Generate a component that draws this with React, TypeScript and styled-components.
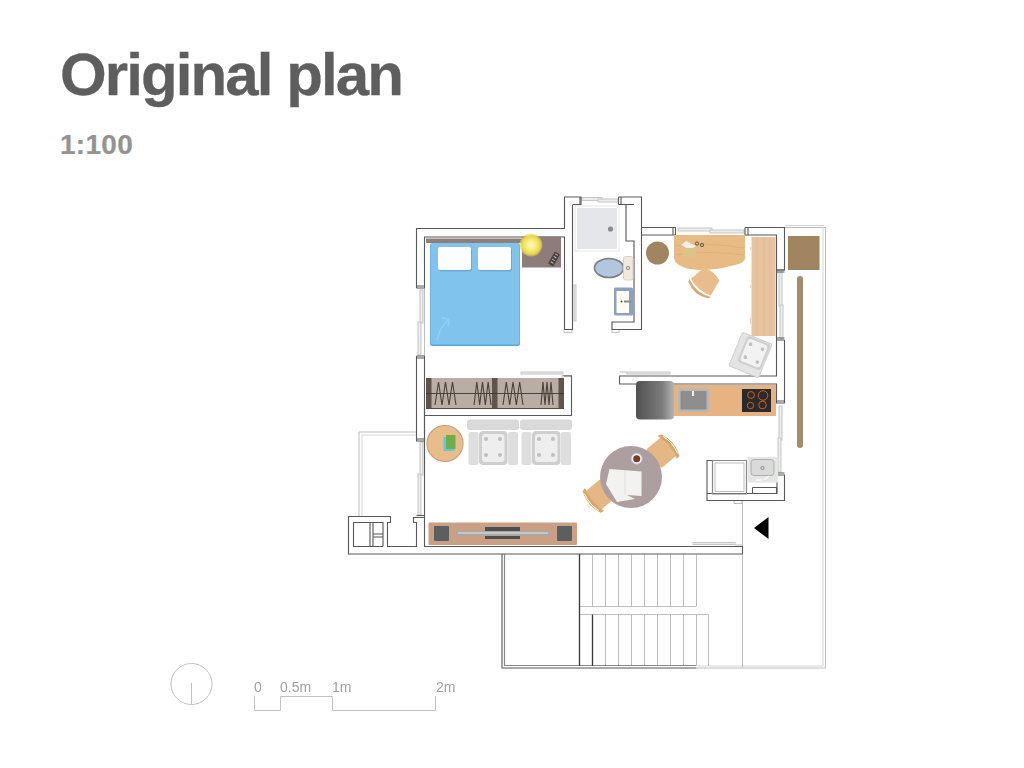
import React from "react";
import styled, { createGlobalStyle } from "styled-components";

const Global = createGlobalStyle`
  html, body { margin: 0; padding: 0; background: #fff; overflow: hidden; }
  #root { width: 1024px; height: 768px; }
`;

const Page = styled.main`
  width: 1024px;
  height: 768px;
  display: flex;
  flex-direction: column;
  background: #fff;
  font-family: "Liberation Sans", Arial, sans-serif;
`;
const Header = styled.header`
  padding: 42px 0 0 60px;
  height: 138px;
  box-sizing: border-box;
`;
const Title = styled.h1`
  margin: 0;
  font-size: 60px;
  line-height: 66px;
  font-weight: 700;
  letter-spacing: -1.9px;
  color: #5e5e5e;
  -webkit-text-stroke: 0.3px #5e5e5e;
`;
const Scale = styled.p`
  margin: 21px 0 0;
  font-size: 28px;
  line-height: 32px;
  font-weight: 700;
  letter-spacing: 0.3px;
  color: #939393;
  -webkit-text-stroke: 0.2px #939393;
`;
const Drawing = styled.svg`
  display: block;
  width: 1024px;
  height: 630px;
  flex: none;
`;
const Wall = styled.path`
  fill: none;
  stroke: #585858;
  stroke-width: 1.1;
`;
const HeavyWall = styled(Wall)`
  stroke: #383838;
  stroke-width: 1.3;
`;
const MidLine = styled(Wall)`
  stroke: #888;
  stroke-width: 1.2;
`;
const Faint = styled.path`
  fill: none;
  stroke: #bdbdbd;
  stroke-width: 1;
`;
const Pale = styled(Faint)`
  stroke: #d6d6d6;
`;
const Sash = styled.rect`
  fill: #ececec;
  stroke: #c6c6c6;
  stroke-width: 1;
`;
const Legend = styled.path`
  fill: none;
  stroke: #c2c2c2;
  stroke-width: 1;
`;
const ScaleLabel = styled.text`
  font-family: "Liberation Sans", Arial, sans-serif;
  font-size: 14px;
  fill: #a0a0a0;
`;

const Zigzag = ({ x, w }: { x: number; w: number }) => {
  const step = w / 6;
  const pts = [0, 1, 2, 3, 4, 5, 6]
    .map((i) => `${x + i * step} ${i % 2 ? 382 : 405}`)
    .join(" L");
  return <path d={`M${pts}`} fill="none" stroke="#4a403a" strokeWidth="1.1" />;
};

const Sofa = ({ x }: { x: number }) => (
  <g>
    <rect x={x} y={419.5} width={52} height={10.5} rx={3} fill="#d9d9d9" />
    <rect x={x + 1.5} y={432} width={10} height={33} rx={2} fill="#dedede" />
    <rect x={x + 41} y={432} width={10} height={33} rx={2} fill="#dedede" />
    <rect x={x + 12} y={431} width={28.5} height={34} rx={4} fill="#cfcfcf" />
    <rect x={x + 15} y={434} width={22.5} height={28} rx={3} fill="#eeeeee" />
    {[[19, 439], [33, 439], [19, 455], [33, 455]].map(([dx, y]) => (
      <circle key={`${dx}-${y}`} cx={x + dx} cy={y} r={2} fill="#bebebe" />
    ))}
  </g>
);

const Chair = ({ transform }: { transform: string }) => (
  <g transform={transform}>
    <rect x={-12} y={-11} width={24} height={22} rx={2} fill="#e5b785" />
    <path d="M-14 -11 Q0 -17 14 -11 L15 -7 Q0 -12 -15 -7 Z" fill="#dba768" />
    <path d="M-11 -11 Q0 -14.5 11 -11" fill="none" stroke="#fff" strokeWidth="0.9" />
  </g>
);

const Furniture = () => (
  <g filter="url(#soft)">
    {/* bed */}
    <rect x={430} y={243} width={90} height={103} rx={2.5} fill="#5aa6dc" />
    <rect x={430.5} y={243} width={89} height={101.5} rx={2} fill="#80c4ee" />
    <rect x={426} y={238.5} width={96} height={4.5} fill="#8f7f79" />
    <rect x={439} y={248.5} width={33} height={23} rx={2} fill="#6ea9d6" />
    <rect x={479} y={248.5} width={33} height={23} rx={2} fill="#6ea9d6" />
    <rect x={438} y={247} width={33} height={23} rx={2} fill="#fbfdff" />
    <rect x={478} y={247} width={33} height={23} rx={2} fill="#fbfdff" />
    <path d="M437 340 Q441 325 449 319 L442 318 M449 319 L448 327" fill="none" stroke="#93cff2" strokeWidth="1.5" />
    {/* nightstand */}
    <rect x={522} y={236.5} width={39} height={31} fill="#8e7b7a" />
    <circle cx={531} cy={245} r={11.5} fill="url(#lamp)" />
    <g transform="rotate(30 554 259)">
      <rect x={551} y={252} width={6} height={14} rx={1} fill="#4a4240" />
      <path d="M552.5 254h3M552.5 257h3M552.5 260h3M552.5 263h3" stroke="#bbb" strokeWidth="1" />
    </g>

    {/* shower */}
    <rect x={575} y={206} width={44} height={45} fill="#fff" stroke="#e6e6e8" />
    <rect x={577} y={208} width={40} height={41} fill="#e5e6ea" />
    <circle cx={610.5} cy={229} r={2.6} fill="#8b8b8b" />
    {/* toilet */}
    <ellipse cx={609} cy={268} rx={14.5} ry={9.5} fill="#b2c6de" stroke="#7d7d7d" strokeWidth="1.6" />
    <rect x={623.5} y={256.5} width={9.5} height={23.5} rx={2} fill="#f1e8de" stroke="#d8d0c6" />
    <circle cx={628} cy={268} r={1.6} fill="none" stroke="#888" />
    {/* basin */}
    <rect x={614} y={287.5} width={19} height={28} rx={1.5} fill="#8ea0bc" />
    <rect x={616.5} y={291} width={12.5} height={22} fill="#fdfcf7" />
    <path d="M624 301.5h7" stroke="#888" strokeWidth="2" />
    <circle cx={621.5} cy={301.5} r={1} fill="#444" />

    {/* study */}
    <circle cx={657.5} cy={253} r={11.5} fill="#a08560" />
    <path d="M674 235H745V258Q745 263 735 265Q710 272 690 269Q675 266 674 258Z" fill="#e8bb85" />
    <path d="M675 246Q700 241 744 248M675 255Q705 250 744 255" fill="none" stroke="#d8a873" strokeWidth="0.6" />
    <path d="M681 245L686 241L696 246L690 250Z" fill="#f4f0e8" />
    <rect x={683} y={248} width={13} height={9} fill="#d9c48a" />
    <circle cx={697} cy={243.5} r={1.6} fill="none" stroke="#555" />
    <circle cx={702} cy={245} r={1.6} fill="none" stroke="#555" />
    <g transform="translate(706 281) rotate(40)">
      <path d="M-13 8Q0 13 13 8L10 -9Q0 -13 -10 -9Z" fill="#e9bd8b" />
      <path d="M-14 9Q0 16 14 9L13 12Q0 19 -13 12Z" fill="#d9a96e" />
    </g>
    <rect x={751.5} y={237} width={24} height={99} fill="#e8c3a0" />
    <path d="M757 237V336M764 237V336M770 237V336" stroke="#e0b68f" strokeWidth="0.6" />
    <path d="M750.5 247v3M750.5 285v3M750.5 318v6" stroke="#e8d2bc" strokeWidth="1" />

    {/* armchair */}
    <g transform="translate(750.5 355) rotate(22)">
      <rect x={-16} y={-18} width={32} height={36} rx={2} fill="#e4e4e4" stroke="#d0d0d0" />
      <rect x={-10} y={-17} width={25} height={28} rx={3} fill="#cfcfcf" />
      <rect x={-8} y={-15} width={21} height={24} rx={3} fill="#f2f2f2" />
      {[[-4, -10], [9, -10], [-4, 4], [9, 4]].map(([x, y]) => (
        <circle key={`${x}-${y}`} cx={x} cy={y} r={1.8} fill="#c0c0c0" />
      ))}
    </g>

    {/* outside store */}
    <rect x={788} y={236} width={31.5} height={34} fill="#a08560" />
    <rect x={797} y={276} width={6} height={172} rx={3} fill="#a38d6a" />

    {/* wardrobe */}
    <rect x={426} y={378} width={138} height={30.5} rx={1} fill="#b9aea4" />
    <rect x={426} y={378} width={5.5} height={30.5} fill="#5f544e" />
    <rect x={492} y={378} width={5.5} height={30.5} fill="#5f544e" />
    <rect x={558.5} y={378} width={5.5} height={30.5} fill="#5f544e" />
    <path d="M426 393.5H564" stroke="#3f3733" strokeWidth="0.9" />
    <path d="M426 408.5H564" stroke="#554b45" strokeWidth="1" />
    <Zigzag x={435} w={21} />
    <Zigzag x={474} w={17} />
    <Zigzag x={503} w={20} />
    <Zigzag x={541} w={12} />

    {/* side table */}
    <circle cx={445} cy={443.5} r={18} fill="#e9bc8c" stroke="#c9a285" strokeWidth="1.2" />
    <rect x={443.5} y={437} width={11} height={14} fill="#5ccbdc" />
    <rect x={446} y={435} width={9.5} height={14} fill="#72ad4e" />

    <Sofa x={467} />
    <Sofa x={520} />

    {/* tv */}
    <rect x={428.5} y={522.5} width={148.5} height={22.5} rx={1} fill="#c9a086" />
    <rect x={434} y={526} width={15} height={15} rx={1} fill="#5c5e60" />
    <rect x={557} y={526} width={15} height={15} rx={1} fill="#5c5e60" />
    <rect x={485} y={527} width={35} height={12} fill="#4d4f50" />
    <path d="M456 531H550L548 536H458Z" fill="#a8a8a4" />
    <path d="M458 533H548" stroke="#e6e6e2" strokeWidth="1" />

    {/* kitchen */}
    <rect x={673.5} y={385} width={102.5} height={31} fill="#e8b383" />
    <rect x={678} y={388.5} width={31} height={23.5} rx={2} fill="#b7b7b5" />
    <rect x={680.5} y={391} width={26} height={18.5} fill="#8e8e8e" />
    <path d="M693 391v5" stroke="#eee" strokeWidth="2" />
    <rect x={742} y={389} width={29} height={23} fill="#2c2c2c" />
    {[[751, 395, 3.4], [763, 395.5, 4.8], [750.5, 405.5, 3.2], [762.5, 405, 3.8]].map(([cx, cy, r]) => (
      <circle key={cx + cy} cx={cx} cy={cy} r={r} fill="none" stroke="#c95d24" strokeWidth="1" />
    ))}
    <rect x={636} y={381} width={38} height={38.5} rx={4} fill="url(#bin)" />

    {/* dining */}
    <Chair transform="translate(662 452) rotate(50)" />
    <Chair transform="translate(600 495) rotate(230)" />
    <circle cx={631} cy={477} r={31} fill="#ad9f9f" />
    <circle cx={636.7} cy={458.7} r={5.5} fill="#eef2f6" stroke="#b8c6d6" />
    <circle cx={636.7} cy={458.7} r={3.5} fill="#7c3a28" />
    <path d="M609.5 469L641.5 471.5V496L627 495L635 499L617 502L606 484Z" fill="#f2f2f0" />
    <path d="M625 470V495" stroke="#dfdfdd" strokeWidth="1" />

    {/* laundry */}
    <rect x={748} y={457} width={30} height={25.5} fill="#e4e6e4" />
    <rect x={751} y={459.5} width={23} height={16} rx={3} fill="#dadada" stroke="#aeaeae" />
    <circle cx={762.5} cy={468} r={1.6} fill="none" stroke="#888" />
    <path d="M756 480h6M764 480l5-4" stroke="#fafafa" strokeWidth="1.4" />
  </g>
);

export default function App() {
  return (
    <>
      <Global />
      <Page>
        <Header>
          <Title>Original plan</Title>
          <Scale>1:100</Scale>
        </Header>
        <Drawing viewBox="0 138 1024 630" aria-label="Floor plan">
          <defs>
            <filter id="soft" x="-5%" y="-5%" width="110%" height="110%">
              <feGaussianBlur stdDeviation="0.5" />
            </filter>
            <filter id="line" x="-2%" y="-2%" width="104%" height="104%">
              <feGaussianBlur stdDeviation="0.28" />
            </filter>
            <radialGradient id="lamp">
              <stop offset="0" stopColor="#fdf9c4" />
              <stop offset="0.45" stopColor="#f6ec7c" />
              <stop offset="0.8" stopColor="#e8d648" />
              <stop offset="1" stopColor="#e8d648" stopOpacity="0.4" />
            </radialGradient>
            <linearGradient id="bin" x1="0" x2="1" y1="0" y2="0">
              <stop offset="0" stopColor="#505050" />
              <stop offset="0.7" stopColor="#7e7e7e" />
              <stop offset="1" stopColor="#b4b4b4" />
            </linearGradient>
          </defs>

          <g filter="url(#line)">
            {/* pale outer lines */}
            <Faint d="M785 227.5H825.5V668H697" />
            <Pale d="M785 225.5H824M823 227V666H697V666" />
            <Faint d="M742.5 501V667.5" />
            <Faint d="M359 516V432H416" />
            <Pale d="M362 516V435H416" />

            {/* stair treads */}
            <Faint d="M592.5 554.5V606.5M605.5 554.5V606.5M618.5 554.5V606.5M631.5 554.5V606.5M644.5 554.5V606.5M657.5 554.5V606.5M670.5 554.5V606.5M683.5 554.5V606.5M696.5 554.5V606.5" />
            <Faint d="M605.5 614.5V666M618.5 614.5V666M631.5 614.5V666M644.5 614.5V666M657.5 614.5V666M670.5 614.5V666M683.5 614.5V666M696.5 614.5V666" />
            <Faint d="M579.5 606.5H696.5M579.5 614.5H708.5V666" />

            {/* window sashes */}
            <Sash x={420} y={290} width={3} height={33} />
            <Sash x={418} y={322} width={3} height={33} />
            <Sash x={420} y={442} width={3} height={33} />
            <Sash x={418} y={474} width={3} height={41} />
            <Faint d="M424.5 288V356M424.5 441V516" />
            <Sash x={582} y={197.5} width={20} height={3} />
            <Sash x={598} y={199} width={20} height={3} />
            <Sash x={678} y={228} width={34} height={3} />
            <Sash x={710} y={230} width={34} height={3} />
            <Sash x={779} y={272} width={3} height={34} />
            <Sash x={780} y={305} width={3} height={34} />
            <Sash x={779} y={406} width={3} height={34} />
            <Sash x={778} y={438} width={3} height={34} />
            <Sash x={521} y={372} width={42} height={2} />
            <Sash x={627} y={372} width={43} height={2} />
            <Sash x={693} y={542.5} width={42} height={2} />
            <Sash x={574} y={285} width={2} height={36} />
            <Faint d="M572 375.5H562V378M619.5 372H627M735 545H742" />
            <Faint d="M612 329.5V332.5H619V329.5M564 329.5V332.5H572V329.5M734 501V503.5H742V501" />

            {/* main walls */}
            <Wall d="M416.5 288V228.5H564.5V197H581V204.5H573M581 197V204.5" />
            <Wall d="M424.5 288V237H564.5V329.5H572.5V204.5" />
            <Wall d="M416.5 288H424.5M416.5 286H424.5M416.5 356H424.5M416.5 358H424.5" />
            <Wall d="M416.5 356V441H424.5V356M416.5 439H424.5" />
            <Wall d="M618.5 197V204.5M618.5 197H641.5V329.5H612V322H634V241H626V204.5H618.5M634 204.5H626" />
            <Wall d="M621 197V204.5M580 197V204.5" />
            <Wall d="M641.5 227.5H675.5V235H641.5M675.5 227.5V235M673 227.5V235" />
            <Wall d="M745 227.5V235H776.5V270H784.5V227.5H745M748 227.5V235" />
            <Wall d="M776.5 270H784.5M776.5 272H784.5M776.5 340H784.5M776.5 338H784.5" />
            <Wall d="M776.5 235V376H619.5V384H776.5V403H784.5V340M776.5 340V376M776.5 401H784.5M776.5 403H784.5" />
            <Wall d="M776.5 473H784.5M776.5 475H784.5V500.5H707V460.5H712M777 475V493.5H707" />
            <Wall d="M424.5 408.5V415.5H571.5V376H563.5M424.5 415.5V441" />
            <Wall d="M424.5 441V546.5H742.5V554H348.5V516.5H390.5V522.5H387.5V546.5H416.5V522.5H413.5V517.5H424.5" />
            <Wall d="M416.5 515.5H424.5" />
            <Wall d="M353.5 546.5V522.5H383V546.5M370 522.5V546.5M373 522.5V546.5M373 534H383M373 537H383M353 546.5H383" />
            <MidLine d="M712.5 460.5H746.5V494H712.5Z" />
            <Faint d="M715 463H744V491.5H715Z" />
            <Wall d="M752.5 487.5H776.5V493.5M752.5 487.5V493.5" />

            {/* stairs */}
            <Wall d="M502 554V668H696.5" />
            <MidLine d="M504.5 554V665.5H696" />
            <HeavyWall d="M579.5 554V666M592.5 614.5V666" />
          </g>

          <Furniture />

          {/* entry marker */}
          <path d="M754 528L768.5 517V539Z" fill="#000" />

          {/* north mark */}
          <Legend as="circle" cx="191.5" cy="684" r="20.5" />
          <Legend d="M191.5 683V705" />

          {/* scale bar */}
          <Legend d="M254.5 696V710.5H280.5V696.5H332.5V710.5H435.5V696" />
          <ScaleLabel x="254" y="692">0</ScaleLabel>
          <ScaleLabel x="280" y="692">0.5m</ScaleLabel>
          <ScaleLabel x="332" y="692">1m</ScaleLabel>
          <ScaleLabel x="436" y="692">2m</ScaleLabel>
        </Drawing>
      </Page>
    </>
  );
}
